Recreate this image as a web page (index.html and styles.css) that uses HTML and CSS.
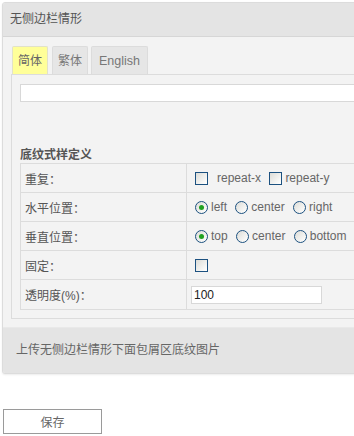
FILE: index.html
```html
<!DOCTYPE html>
<html lang="zh-CN">
<head>
  <meta charset="UTF-8" />
  <title>无侧边栏情形</title>
  <link rel="stylesheet" href="styles.css">
</head>
<body>
  <!-- Panel -->
  <div class="panel">
    <div class="panel-head">无侧边栏情形</div>
    <div class="panel-body">
      <ul class="tabs">
        <li class="tab active">简体</li>
        <li class="tab">繁体</li>
        <li class="tab en">English</li>
      </ul>
      <div class="tab-box">
        <input class="text-input wide" type="text" />
        <h3 class="block-title">底纹式样定义</h3>
        <table class="form-table">
          <tr>
            <td class="label">重复：</td>
            <td class="field">
              <span class="check"></span><span class="opt spaced">repeat-x</span>
              <span class="check"></span><span class="opt">repeat-y</span>
            </td>
          </tr>
          <tr>
            <td class="label">水平位置：</td>
            <td class="field">
              <span class="radio on"></span><span class="opt">left</span>
              <span class="radio"></span><span class="opt">center</span>
              <span class="radio"></span><span class="opt">right</span>
            </td>
          </tr>
          <tr>
            <td class="label">垂直位置：</td>
            <td class="field">
              <span class="radio on"></span><span class="opt">top</span>
              <span class="radio"></span><span class="opt">center</span>
              <span class="radio"></span><span class="opt">bottom</span>
            </td>
          </tr>
          <tr>
            <td class="label">固定：</td>
            <td class="field"><span class="check"></span></td>
          </tr>
          <tr class="last">
            <td class="label">透明度(%)：</td>
            <td class="field"><input class="text-input small" type="text" value="100" /></td>
          </tr>
        </table>
      </div>
    </div>
    <div class="panel-foot">上传无侧边栏情形下面包屑区底纹图片</div>
  </div>

  <button class="save-btn">保存</button>
</body>
</html>
```

FILE: styles.css
```css
body {
  margin: 0;
  font-family: "Liberation Sans", "Noto Sans CJK SC", sans-serif;
  font-size: 12px;
  color: #666;
  background-color: #fff;
  overflow: hidden;
  width: 354px;
  height: 436px;
}

/* Panel */
.panel {
  margin: 2px 0 0 2px;
  width: 400px;
  background-color: #f3f3f3;
  border: 1px solid #dcdcdc;
  border-radius: 3px;
  box-shadow: 0 1px 2px rgba(0,0,0,0.08);
  overflow: hidden;
}

.panel-head {
  height: 33px;
  line-height: 33px;
  padding-left: 7px;
  background-color: #e4e4e4;
  border-bottom: 1px solid #d6d6d6;
  color: #555;
}

.panel-body {
  padding: 9px 0 8px 8px;
}

.panel-foot {
  height: 45px;
  line-height: 45px;
  padding-left: 13px;
  background-color: #e4e4e4;
  border-top: 1px solid #e9e9e9;
  color: #666;
}

/* Tabs */
.tabs {
  list-style: none;
  margin: 0 0 0 1px;
  padding: 0;
  display: flex;
  gap: 4px;
}

.tab {
  height: 27px;
  line-height: 28px;
  padding: 0 5px;
  background-color: #e6e6e6;
  border: 1px solid #dcdcdc;
  border-bottom: none;
  border-radius: 2px 2px 0 0;
  color: #777;
  font-size: 12px;
}

.tab.active {
  background-color: #ffff99;
  border-color: #e2e2c8;
  color: #666;
}

.tab.en {
  margin-left: -1px;
  padding: 0 7px;
  font-size: 12.5px;
}

.tab-box {
  border: 1px solid #dcdcdc;
  border-right: none;
  padding: 9px 0 8px 8px;
}

.text-input {
  display: block;
  box-sizing: border-box;
  height: 18px;
  margin: 0;
  padding: 0 2px;
  border: 1px solid #d8d8d8;
  background-color: #fff;
  font-family: "Liberation Sans", sans-serif;
  font-size: 12px;
  color: #222;
}

.text-input.wide {
  width: 380px;
}

.text-input.small {
  width: 131px;
}

.block-title {
  margin: 45px 0 0;
  height: 16px;
  line-height: 16px;
  font-size: 12px;
  font-weight: bold;
  color: #555;
}

/* Form table */
.form-table {
  border-collapse: collapse;
  width: 380px;
}

.form-table td {
  height: 28px;
  padding: 0;
  border: 1px solid #dcdcdc;
  vertical-align: middle;
}

.form-table tr.last td {
  height: 29px;
}

.form-table .label {
  width: 161px;
  padding-left: 4px;
  color: #555;
}

.form-table .field {
  padding-left: 8px;
  white-space: nowrap;
}

.form-table tr.last .field {
  padding-left: 4px;
}

.opt {
  display: inline-block;
  vertical-align: middle;
  margin: 0 5px 0 3px;
  color: #666;
}

.opt.spaced {
  margin: 0 5px 0 9px;
}

.check,
.radio {
  display: inline-block;
  vertical-align: middle;
  box-sizing: border-box;
  width: 13px;
  height: 13px;
  border: 1px solid #1c5180;
  background: linear-gradient(135deg, #dcdcd7 0%, #fbfbfa 85%, #fff 100%);
}

.radio {
  border-radius: 50%;
  position: relative;
}

.radio.on::after {
  content: "";
  position: absolute;
  top: 3px;
  left: 3px;
  width: 5px;
  height: 5px;
  border-radius: 50%;
  background-color: #21a121;
}

/* Save button */
.save-btn {
  display: block;
  margin: 35px 0 0 3px;
  width: 99px;
  height: 25px;
  padding: 0;
  background-color: #fff;
  border: 1px solid #9a9a9a;
  font-family: "Liberation Sans", "Noto Sans CJK SC", sans-serif;
  font-size: 12px;
  color: #666;
  cursor: pointer;
}
```
